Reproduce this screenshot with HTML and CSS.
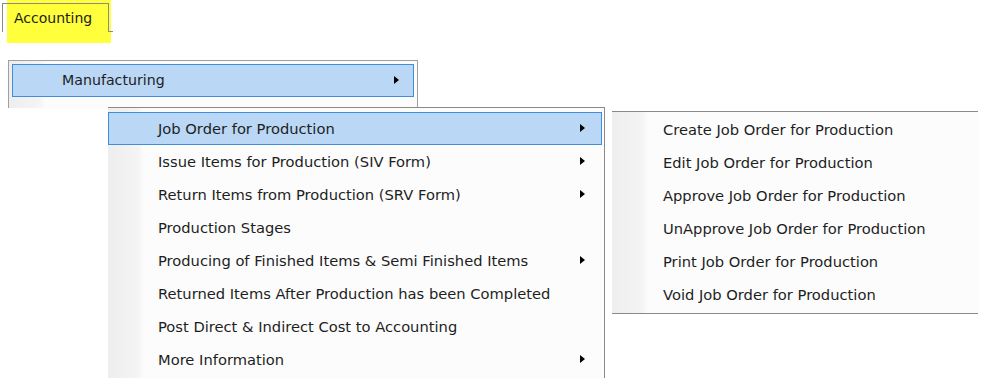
FILE: index.html
```html
<!DOCTYPE html>
<html lang="en">
<head>
	<meta charset="UTF-8">
	<title>Accounting menu</title>
<link rel="stylesheet" href="styles.css">
</head>
<body>
	<div class="stage">
		<div class="tabbar">
			<div class="tab_hl">Accounting</div>
			<div class="tab_line"></div>
		</div>

		<div class="menu menu_one">
			<div class="item on sub">Manufacturing<span class="arr"></span></div>
		</div>

		<div class="menu menu_two">
			<div class="item on sub">Job Order for Production<span class="arr"></span></div>
			<div class="item sub">Issue Items for Production (SIV Form)<span class="arr"></span></div>
			<div class="item sub">Return Items from Production (SRV Form)<span class="arr"></span></div>
			<div class="item">Production Stages</div>
			<div class="item sub">Producing of Finished Items &amp; Semi Finished Items<span class="arr"></span></div>
			<div class="item">Returned Items After Production has been Completed</div>
			<div class="item">Post Direct &amp; Indirect Cost to Accounting</div>
			<div class="item sub">More Information<span class="arr"></span></div>
		</div>

		<div class="menu menu_three">
			<div class="item">Create Job Order for Production</div>
			<div class="item">Edit Job Order for Production</div>
			<div class="item">Approve Job Order for Production</div>
			<div class="item">UnApprove Job Order for Production</div>
			<div class="item">Print Job Order for Production</div>
			<div class="item">Void Job Order for Production</div>
		</div>
	</div>
</body>
</html>
```
FILE: styles.css
```css
*{
	box-sizing: border-box;
}
body{
	margin: 0;
	background: #fff;
	font-family: "DejaVu Sans", Verdana, sans-serif;
	font-size: 14.7px;
	color: #1e1e1e;
}
.stage{
	position: relative;
	width: 985px;
	height: 383px;
}
/* tab */
.tabbar{
	position: relative;
	height: 43px;
}
.tab_hl{
	margin-left: 7px;
	width: 104px;
	height: 43px;
	background: #ffff3c;
	padding: 8px 0 0 7px;
	line-height: 20px;
	font-size: 14px;
}
.tab_line{
	position: absolute;
	left: 2px;
	top: 3px;
	width: 107px;
	height: 29px;
	border: 1px solid #8a8a8a;
	border-bottom: none;
}
.tab_line::after{
	content: '';
	position: absolute;
	right: -5px;
	bottom: 0;
	width: 4px;
	border-top: 1px solid #8a8a8a;
}
/* menus */
.menu{
	position: absolute;
	background: linear-gradient(to right, #eeeeee 0, #f4f4f4 30px, #fcfcfc 36px, #fcfcfc 100%);
}
.item{
	position: relative;
	height: 33px;
	line-height: 31px;
	border: 1px solid transparent;
	white-space: nowrap;
}
.item.on{
	background: #bad7f5;
	border-color: #3f8edb;
}
.arr{
	position: absolute;
	top: 11px;
	right: 16px;
	width: 0;
	height: 0;
	border-left: 5px solid #000;
	border-top: 4px solid transparent;
	border-bottom: 4px solid transparent;
}
.menu_one{
	left: 8px;
	top: 60px;
	width: 410px;
	height: 48px;
	padding: 3px 3px 0 3px;
	border: 1px solid #a0a0a0;
	border-bottom: none;
}
.menu_one .item{
	height: 33px;
	padding-left: 49px;
	font-size: 14.2px;
}
.menu_one .arr{
	right: 14px;
}
.menu_two{
	left: 108px;
	top: 107px;
	width: 497px;
	height: 271px;
	padding: 4px 2px 0 0;
	border-top: 1px solid #8a8a8a;
	border-right: 1px solid #8a8a8a;
}
.menu_two .item{
	padding-left: 49px;
}
.menu_three{
	left: 612px;
	top: 111px;
	width: 366px;
	height: 203px;
	padding-top: 1px;
	border-top: 1px solid #8a8a8a;
	border-bottom: 1px solid #8a8a8a;
}
.menu_three .item{
	padding-left: 50px;
}
```
